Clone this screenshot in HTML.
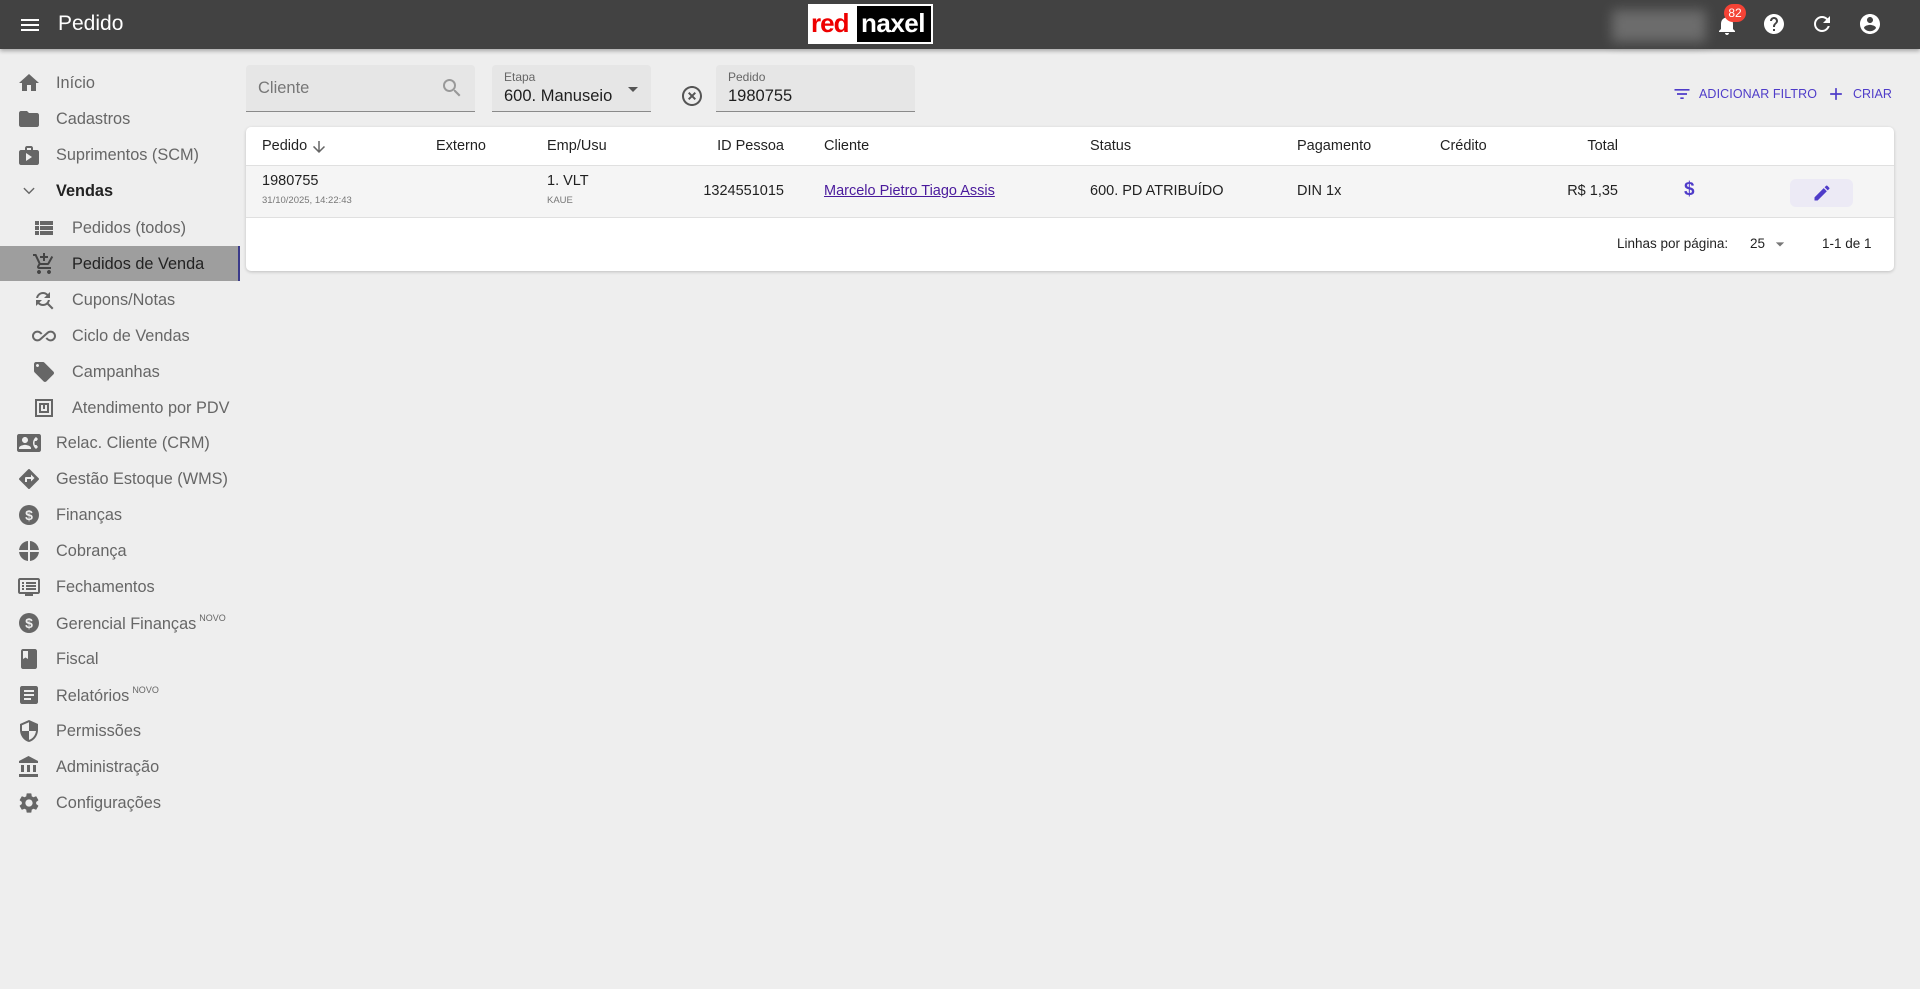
<!DOCTYPE html><html><head><meta charset="utf-8"><style>
*{box-sizing:border-box;margin:0;padding:0}
body{width:1920px;height:989px;background:#eeeeee;font-family:"Liberation Sans",Roboto,sans-serif;position:relative;overflow:hidden;color:rgba(0,0,0,.87)}
.abs{position:absolute}
.hdr{left:0;top:0;width:1920px;height:49px;background:#424242;box-shadow:0 2px 4px rgba(0,0,0,.3)}
.side .it{position:absolute;left:0;width:240px;height:36px;display:flex;align-items:center;font-size:16.3px;color:#666}
.side .it svg{position:absolute;width:24px;height:24px;fill:#666}
.side .it span{position:absolute}
.side .top svg{left:17px}.side .top span{left:56px}
.side .sub svg{left:32px}.side .sub span{left:72px}
sup{font-size:9px;vertical-align:8px;margin-left:3px}
.fld{background:#e6e6e6;border-bottom:1px solid #8a8a8a;border-radius:4px 4px 0 0}
.card{left:246px;top:127px;width:1648px;height:144px;background:#fff;border-radius:5px;box-shadow:0 1px 3px rgba(0,0,0,.2)}
.t{position:absolute;font-size:14.5px;white-space:nowrap}
</style></head><body>
<div class="abs hdr">
<svg class="abs" style="left:18px;top:13px" width="24" height="24" viewBox="0 0 24 24" fill="#fff"><path d="M3 18h18v-2H3v2zm0-5h18v-2H3v2zm0-7v2h18V6H3z"/></svg>
<div class="abs" style="left:58px;top:12px;color:#fff;font-size:21px">Pedido</div>
<div class="abs" style="left:808px;top:4px;width:125px;height:40px;background:#000;border:2px solid #fff"></div>
<div class="abs" style="left:810px;top:6px;width:47px;height:36px;background:#fff"></div>
<div class="abs" style="left:811px;top:8px;font-size:26px;font-weight:bold;color:#e00;letter-spacing:-1px">red</div>
<div class="abs" style="left:861px;top:8px;font-size:26px;font-weight:bold;color:#fff;letter-spacing:-0.5px">naxel</div>
<div class="abs" style="left:1612px;top:10px;width:94px;height:32px;background:#777;filter:blur(6px);opacity:.8"></div>
<svg class="abs" style="left:1715px;top:13px" width="24" height="24" viewBox="0 0 24 24" fill="#fff"><path d="M12 22c1.1 0 2-.9 2-2h-4c0 1.1.89 2 2 2zm6-6v-5c0-3.07-1.64-5.64-4.5-6.32V4c0-.83-.67-1.5-1.5-1.5s-1.5.67-1.5 1.5v.68C7.63 5.36 6 7.92 6 11v5l-2 2v1h16v-1l-2-2z"/></svg>
<div class="abs" style="left:1724px;top:4px;height:18px;min-width:22px;padding:0 4px;border-radius:9px;background:#f44336;color:#fff;font-size:12px;line-height:18px;text-align:center">82</div>
<svg class="abs" style="left:1762px;top:12px" width="24" height="24" viewBox="0 0 24 24" fill="#fff"><path d="M12 2C6.48 2 2 6.48 2 12s4.48 10 10 10 10-4.48 10-10S17.52 2 12 2zm1 17h-2v-2h2v2zm2.07-7.75l-.9.92C13.45 12.9 13 13.5 13 15h-2v-.5c0-1.1.45-2.1 1.17-2.830l1.24-1.26c.37-.36.59-.86.59-1.41 0-1.1-.9-2-2-2s-2 .9-2 2H8c0-2.21 1.79-4 4-4s4 1.79 4 4c0 .88-.36 1.68-.93 2.25z"/></svg>
<svg class="abs" style="left:1810px;top:12px" width="24" height="24" viewBox="0 0 24 24" fill="#fff"><path d="M17.65 6.35C16.2 4.9 14.21 4 12 4c-4.42 0-7.99 3.58-7.990 8s3.57 8 7.99 8c3.73 0 6.84-2.55 7.73-6h-2.08c-.82 2.33-3.04 4-5.65 4-3.31 0-6-2.69-6-6s2.69-6 6-6c1.66 0 3.14.69 4.22 1.78L13 11h7V4l-2.35 2.35z"/></svg>
<svg class="abs" style="left:1858px;top:12px" width="24" height="24" viewBox="0 0 24 24" fill="#fff"><path d="M12 2C6.48 2 2 6.48 2 12s4.48 10 10 10 10-4.48 10-10S17.52 2 12 2zm0 3c1.66 0 3 1.34 3 3s-1.34 3-3 3-3-1.34-3-3 1.34-3 3-3zm0 14.2c-2.5 0-4.71-1.28-6-3.22.03-1.99 4-3.08 6-3.08 1.99 0 5.97 1.09 6 3.08-1.29 1.940-3.5 3.22-6 3.22z"/></svg>
</div>

<div class="side">
<div class="abs" style="left:0;top:246px;width:240px;height:35px;background:#9e9e9e;border-right:2px solid #3a3a8a"></div>
<div class="it top" style="top:65px"><svg viewBox="0 0 24 24"><path d="M10 20v-6h4v6h5v-8h3L12 3 2 12h3v8z"/></svg><span>Início</span></div>
<div class="it top" style="top:101px"><svg viewBox="0 0 24 24"><path d="M10 4H4c-1.1 0-2 .9-2 2v12c0 1.1.9 2 2 2h16c1.1 0 2-.9 2-2V8c0-1.1-.9-2-2-2h-8l-2-2z"/></svg><span>Cadastros</span></div>
<div class="it top" style="top:137px"><svg viewBox="0 0 24 24"><path d="M20 7h-4V5c0-1.1-.9-2-2-2h-4c-1.1 0-2 .9-2 2v2H4c-1.1 0-2 .9-2 2v11c0 1.1.9 2 2 2h16c1.1 0 2-.9 2-2V9c0-1.1-.9-2-2-2zM10 5h4v2h-4V5zm-1 13V10l6 4-6 4z"/></svg><span>Suprimentos (SCM)</span></div>
<div class="it top" style="top:173px"><svg viewBox="0 0 24 24"><path d="M7.4 8.6L12 13.2l4.6-4.6 1 1-5.6 5.6-5.6-5.6z"/></svg><span style="color:#222;font-weight:bold">Vendas</span></div>
<div class="it sub" style="top:210px"><svg viewBox="0 0 24 24"><path d="M3 14h4v-4H3v4zm0 5h4v-4H3v4zM3 9h4V5H3v4zm5 5h13v-4H8v4zm0 5h13v-4H8v4zM8 5v4h13V5H8z"/></svg><span>Pedidos (todos)</span></div>
<div class="it sub" style="top:246px"><svg viewBox="0 0 24 24" style="fill:#444"><path d="M11 9h2V6h3V4h-3V1h-2v3H8v2h3v3zm-4 9c-1.1 0-2 .9-2 2s.9 2 2 2 2-.9 2-2-.9-2-2-2zm10 0c-1.1 0-2 .9-2 2s.9 2 2 2 2-.9 2-2-.9-2-2-2zM7.17 14.75L7.2 14.63 8.1 13h7.45c.75 0 1.41-.41 1.75-1.03l3.86-7.01L19.42 4l-3.87 7H8.53L4.27 2H1v2h2l3.6 7.59-1.35 2.45C4.52 15.37 5.48 17 7 17h12v-2H7.42c-.13 0-.25-.11-.25-.25z"/></svg><span style="color:#222">Pedidos de Venda</span></div>
<div class="it sub" style="top:282px"><svg viewBox="0 0 24 24"><path d="M11 6c1.38 0 2.63.56 3.54 1.46L12 10h6V4l-2.05 2.05C14.68 4.78 12.93 4 11 4c-3.53 0-6.43 2.61-6.92 6H6.1c.46-2.28 2.48-4 4.9-4zm5.64 9.14c.66-.9 1.12-1.97 1.28-3.14H15.9c-.46 2.28-2.48 4-4.9 4-1.38 0-2.63-.56-3.54-1.46L10 12H4v6l2.05-2.05C7.32 17.22 9.07 18 11 18c1.55 0 2.98-.51 4.14-1.36L20 21.49 21.49 20l-4.85-4.86z"/></svg><span>Cupons/Notas</span></div>
<div class="it sub" style="top:318px"><svg viewBox="0 0 24 24"><path d="M18.6 6.62c-1.44 0-2.8.56-3.77 1.53L12 10.66 10.48 12h.01L7.8 14.39c-.64.64-1.49.99-2.4.99-1.87 0-3.39-1.51-3.39-3.38S3.53 8.62 5.4 8.62c.91 0 1.76.35 2.44 1.03l1.13 1 1.51-1.34L9.22 8.2C8.2 7.18 6.84 6.62 5.4 6.62 2.42 6.62 0 9.04 0 12s2.42 5.38 5.4 5.38c1.44 0 2.8-.56 3.77-1.53l2.83-2.5.01.01L13.52 12h-.01l2.69-2.39c.64-.64 1.49-.99 2.4-.99 1.87 0 3.39 1.51 3.39 3.38s-1.52 3.38-3.39 3.38c-.9 0-1.76-.35-2.44-1.03l-1.14-1.01-1.51 1.34 1.27 1.12c1.02 1.01 2.37 1.57 3.82 1.57 2.98 0 5.4-2.41 5.4-5.38s-2.42-5.37-5.4-5.37z"/></svg><span>Ciclo de Vendas</span></div>
<div class="it sub" style="top:354px"><svg viewBox="0 0 24 24"><path d="M21.41 11.58l-9-9C12.05 2.22 11.55 2 11 2H4c-1.1 0-2 .9-2 2v7c0 .55.22 1.05.59 1.42l9 9c.36.36.86.58 1.41.58.55 0 1.05-.22 1.41-.59l7-7c.37-.36.59-.86.59-1.41 0-.55-.23-1.06-.59-1.42zM5.5 7C4.67 7 4 6.33 4 5.5S4.67 4 5.5 4 7 4.67 7 5.5 6.33 7 5.5 7z"/></svg><span>Campanhas</span></div>
<div class="it sub" style="top:390px"><svg viewBox="0 0 24 24"><path d="M3 3h18v18H3V3zm2 2v14h14V5H5zm2 2h10v10H7V7zm2 2v6h6V9h-2v4h-2V9H9z"/></svg><span>Atendimento por PDV</span></div>
<div class="it top" style="top:425px"><svg viewBox="0 0 24 24"><path d="M22 3H2C.9 3 0 3.9 0 5v14c0 1.1.9 2 2 2h20c1.1 0 1.99-.9 1.99-2L24 5c0-1.1-.9-2-2-2zM8 6c1.66 0 3 1.34 3 3s-1.34 3-3 3-3-1.34-3-3 1.34-3 3-3zm6 12H2v-1c0-2 4-3.1 6-3.1s6 1.1 6 3.1v1zm3.85-4h1.64L21 16l-1.99 1.99c-1.31-.98-2.28-2.38-2.73-3.99-.18-.64-.28-1.31-.28-2s.1-1.36.28-2c.45-1.62 1.42-3.01 2.73-3.99L21 8l-1.51 2h-1.64c-.22.63-.35 1.3-.35 2s.13 1.37.35 2z"/></svg><span>Relac. Cliente (CRM)</span></div>
<div class="it top" style="top:461px"><svg viewBox="0 0 24 24"><path d="M21.71 11.29l-9-9c-.39-.39-1.02-.39-1.41 0l-9 9c-.39.39-.39 1.02 0 1.41l9 9c.39.39 1.02.39 1.41 0l9-9c.39-.38.39-1.01 0-1.41zM14 14.5V12h-4v3H8v-4c0-.55.45-1 1-1h5V7.5l3.5 3.5-3.5 3.5z"/></svg><span>Gestão Estoque (WMS)</span></div>
<div class="it top" style="top:497px"><svg viewBox="0 0 24 24"><circle cx="12" cy="12" r="10"/><text x="12" y="17" text-anchor="middle" font-size="14" font-weight="bold" fill="#eee" font-family="Liberation Sans">$</text></svg><span>Finanças</span></div>
<div class="it top" style="top:533px"><svg viewBox="0 0 24 24"><path d="M11 2v9H2.05C2.55 6.06 6.4 2.36 11 2zm2 0v9h8.95C21.45 6.06 17.6 2.36 13 2zm0 11v8.95c4.6-.36 8.45-4.06 8.95-8.95H13zM2.05 13c.5 4.89 4.35 8.59 8.95 8.95V13H2.05z"/></svg><span>Cobrança</span></div>
<div class="it top" style="top:569px"><svg viewBox="0 0 24 24"><path d="M21 3H3c-1.1 0-2 .9-2 2v12c0 1.1.9 2 2 2h5v2h8v-2h5c1.1 0 2-.9 2-2V5c0-1.1-.9-2-2-2zm0 14H3V5h18v12zM5 7h2v2H5zm0 3h2v2H5zm0 3h2v2H5zm4-6h10v2H9zm0 3h10v2H9zm0 3h10v2H9z"/></svg><span>Fechamentos</span></div>
<div class="it top" style="top:605px"><svg viewBox="0 0 24 24"><circle cx="12" cy="12" r="10"/><text x="12" y="17" text-anchor="middle" font-size="14" font-weight="bold" fill="#eee" font-family="Liberation Sans">$</text></svg><span>Gerencial Finanças<sup>NOVO</sup></span></div>
<div class="it top" style="top:641px"><svg viewBox="0 0 24 24"><path d="M18 2H6c-1.1 0-2 .9-2 2v16c0 1.1.9 2 2 2h12c1.1 0 2-.9 2-2V4c0-1.1-.9-2-2-2zM6 4h5v8l-2.5-1.5L6 12V4z"/></svg><span>Fiscal</span></div>
<div class="it top" style="top:677px"><svg viewBox="0 0 24 24"><path d="M19 3H5c-1.1 0-2 .9-2 2v14c0 1.1.9 2 2 2h14c1.1 0 2-.9 2-2V5c0-1.1-.9-2-2-2zm-5 14H7v-2h7v2zm3-4H7v-2h10v2zm0-4H7V7h10v2z"/></svg><span>Relatórios<sup>NOVO</sup></span></div>
<div class="it top" style="top:713px"><svg viewBox="0 0 24 24"><path d="M12 1L3 5v6c0 5.55 3.84 10.74 9 12 5.16-1.26 9-6.45 9-12V5l-9-4zm0 10.99h7c-.53 4.12-3.28 7.79-7 8.94V12H5V6.3l7-3.11v8.8z"/></svg><span>Permissões</span></div>
<div class="it top" style="top:749px"><svg viewBox="0 0 24 24"><path d="M4 10v7h3v-7H4zm6 0v7h3v-7h-3zM2 22h19v-3H2v3zm14-12v7h3v-7h-3zm-4.5-9L2 6v2h19V6l-9.5-5z"/></svg><span>Administração</span></div>
<div class="it top" style="top:785px"><svg viewBox="0 0 24 24"><path d="M19.14 12.94c.04-.3.06-.61.06-.94 0-.32-.02-.64-.07-.94l2.03-1.58a.49.49 0 00.12-.61l-1.92-3.32a.49.49 0 00-.59-.22l-2.39.96c-.5-.38-1.03-.7-1.62-.94l-.36-2.54a.484.484 0 00-.48-.41h-3.84c-.24 0-.43.17-.47.41l-.36 2.54c-.59.24-1.13.57-1.62.94l-2.39-.96a.49.49 0 00-.59.22L2.74 8.87c-.12.21-.08.47.12.61l2.03 1.58c-.05.3-.09.63-.09.94s.02.64.07.94l-2.03 1.58a.49.49 0 00-.12.61l1.92 3.32c.12.22.37.29.59.22l2.39-.96c.5.38 1.03.7 1.62.94l.36 2.54c.05.24.24.41.48.41h3.84c.24 0 .44-.17.47-.41l.36-2.54c.59-.24 1.13-.56 1.62-.94l2.39.96c.22.08.47 0 .59-.22l1.92-3.32c.12-.22.07-.47-.12-.61l-2.01-1.58zM12 15.6c-1.98 0-3.6-1.62-3.6-3.6s1.62-3.6 3.6-3.6 3.6 1.62 3.6 3.6-1.62 3.6-3.6 3.6z"/></svg><span>Configurações</span></div>
</div>

<div class="abs fld" style="left:246px;top:65px;width:229px;height:47px"><div class="t" style="left:12px;top:14px;font-size:16.5px;color:#777">Cliente</div>
<svg class="abs" style="left:194px;top:11px" width="24" height="24" viewBox="0 0 24 24" fill="#999"><path d="M15.5 14h-.79l-.28-.27A6.47 6.47 0 0016 9.5 6.5 6.5 0 109.5 16c1.61 0 3.09-.59 4.23-1.57l.27.28v.79l5 4.99L20.49 19l-4.99-5zm-6 0C7.01 14 5 11.990 5 9.5S7.01 5 9.5 5 14 7.01 14 9.5 11.99 14 9.5 14z"/></svg></div>
<div class="abs fld" style="left:492px;top:65px;width:159px;height:47px"><div class="t" style="left:12px;top:5px;font-size:12px;color:#666">Etapa</div><div class="t" style="left:12px;top:22px;font-size:16.5px">600. Manuseio</div>
<svg class="abs" style="left:129px;top:12px" width="24" height="24" viewBox="0 0 24 24" fill="#555"><path d="M7 10l5 5 5-5z"/></svg></div>
<svg class="abs" style="left:680px;top:84px" width="24" height="24" viewBox="0 0 24 24" fill="#555"><path d="M14.59 8L12 10.59 9.41 8 8 9.41 10.59 12 8 14.59 9.41 16 12 13.41 14.59 16 16 14.59 13.41 12 16 9.41 14.59 8zM12 2C6.47 2 2 6.47 2 12s4.47 10 10 10 10-4.47 10-10S17.53 2 12 2zm0 18c-4.41 0-8-3.59-8-8s3.59-8 8-8 8 3.59 8 8-3.59 8-8 8z"/></svg>
<div class="abs fld" style="left:716px;top:65px;width:199px;height:47px"><div class="t" style="left:12px;top:5px;font-size:12px;color:#666">Pedido</div><div class="t" style="left:12px;top:22px;font-size:16.5px">1980755</div></div>

<svg class="abs" style="left:1672px;top:84px" width="20" height="20" viewBox="0 0 24 24" fill="#4f3cc9"><path d="M10 18h4v-2h-4v2zM3 6v2h18V6H3zm3 7h12v-2H6v2z"/></svg>
<div class="t" style="left:1699px;top:87px;font-size:12.5px;color:#4f3cc9;letter-spacing:.1px">ADICIONAR FILTRO</div>
<svg class="abs" style="left:1826px;top:84px" width="20" height="20" viewBox="0 0 24 24" fill="#4f3cc9"><path d="M19 13h-6v6h-2v-6H5v-2h6V5h2v6h6v2z"/></svg>
<div class="t" style="left:1853px;top:87px;font-size:12.5px;color:#4f3cc9">CRIAR</div>

<div class="abs card">
<div class="abs" style="left:0;top:38px;width:1648px;height:53px;background:#f5f5f5;border-top:1px solid #e0e0e0;border-bottom:1px solid #e0e0e0"></div>
<div class="t" style="left:16px;top:11px">Pedido</div>
<svg class="abs" style="left:64px;top:11px" width="18" height="18" viewBox="0 0 24 24" fill="#666"><path d="M20 12l-1.41-1.41L13 16.17V4h-2v12.17l-5.58-5.59L4 12l8 8 8-8z"/></svg>
<div class="t" style="left:190px;top:11px">Externo</div>
<div class="t" style="left:301px;top:11px">Emp/Usu</div>
<div class="t" style="left:438px;top:11px;width:100px;text-align:right">ID Pessoa</div>
<div class="t" style="left:578px;top:11px">Cliente</div>
<div class="t" style="left:844px;top:11px">Status</div>
<div class="t" style="left:1051px;top:11px">Pagamento</div>
<div class="t" style="left:1194px;top:11px">Crédito</div>
<div class="t" style="left:1300px;top:11px;width:72px;text-align:right">Total</div>

<div class="t" style="left:16px;top:46px">1980755</div>
<div class="t" style="left:16px;top:68px;font-size:9.5px;color:#777">31/10/2025, 14:22:43</div>
<div class="t" style="left:301px;top:46px">1. VLT</div>
<div class="t" style="left:301px;top:68px;font-size:9.5px;color:#777">KAUE</div>
<div class="t" style="left:438px;top:56px;width:100px;text-align:right">1324551015</div>
<div class="t" style="left:578px;top:56px;color:#4a1a9c;text-decoration:underline">Marcelo Pietro Tiago Assis</div>
<div class="t" style="left:844px;top:56px">600. PD ATRIBUÍDO</div>
<div class="t" style="left:1051px;top:56px">DIN 1x</div>
<div class="t" style="left:1272px;top:56px;width:100px;text-align:right">R$ 1,35</div>
<div class="t" style="left:1438px;top:52px;font-size:19px;font-weight:bold;color:#4f3cc9">$</div>
<div class="abs" style="left:1544px;top:52px;width:63px;height:28px;background:#eceaf5;border-radius:6px"></div>
<svg class="abs" style="left:1566px;top:56px" width="20" height="20" viewBox="0 0 24 24" fill="#4f3cc9"><path d="M3 17.25V21h3.75L17.81 9.94l-3.75-3.75L3 17.25zM20.71 7.04a1 1 0 000-1.41l-2.34-2.34a1 1 0 00-1.41 0l-1.83 1.83 3.75 3.75 1.83-1.83z"/></svg>

<div class="t" style="left:1371px;top:109px;font-size:13.5px">Linhas por página:</div>
<div class="t" style="left:1504px;top:109px;font-size:13.5px">25</div>
<svg class="abs" style="left:1524px;top:107px" width="20" height="20" viewBox="0 0 24 24" fill="#777"><path d="M7 10l5 5 5-5z"/></svg>
<div class="t" style="left:1576px;top:109px;font-size:13.5px">1-1 de 1</div>
</div>
</body></html>
